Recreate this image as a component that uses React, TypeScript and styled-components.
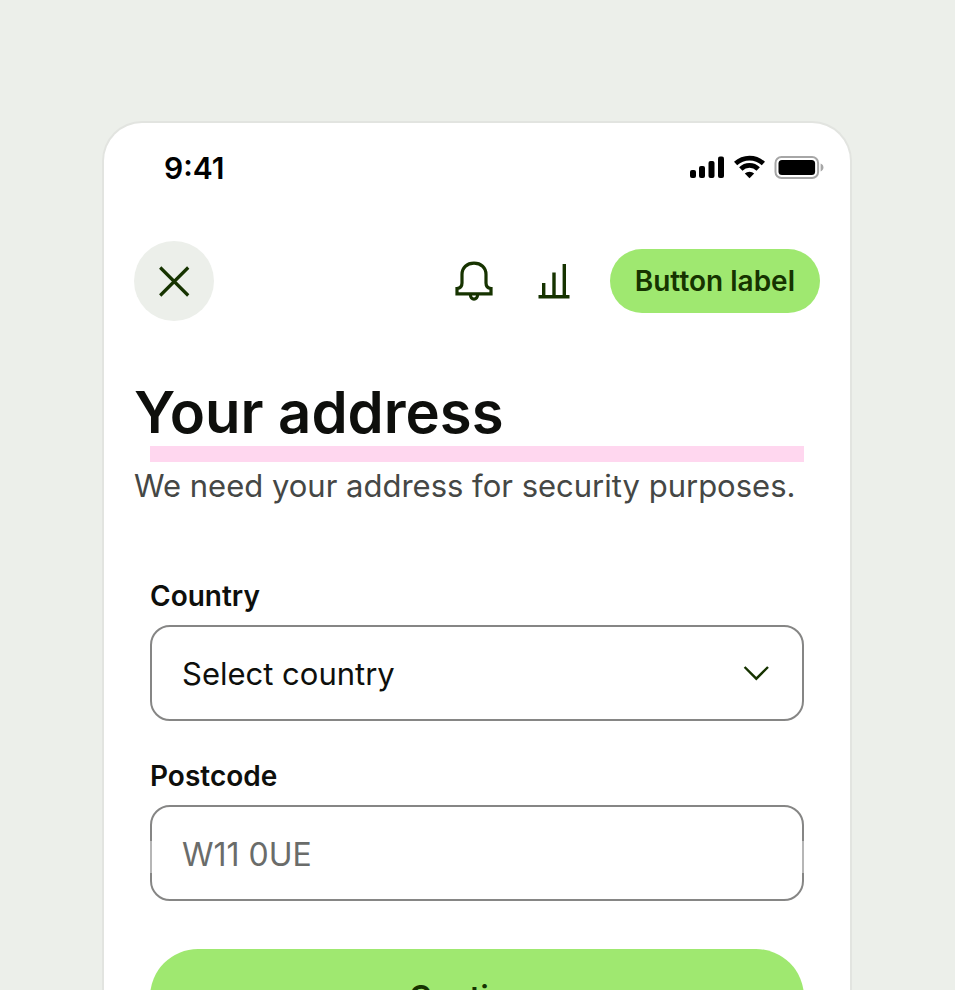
import React from "react";
import styled, { createGlobalStyle } from "styled-components";

const color = {
  canvas: "#ecefea",
  screen: "#ffffff",
  frame: "#e2e4e0",
  forest: "#163300",
  green: "#9fe870",
  ink: "#0e0f0c",
  body: "#454745",
  placeholder: "#6a6c6a",
  outline: "#868685",
  spacing: "#ffd7ef",
};

const GlobalStyle = createGlobalStyle`
  *, *::before, *::after { box-sizing: border-box; }
  body {
    margin: 0;
    background: ${color.canvas};
    font-family: Inter, "Liberation Sans", sans-serif;
  }
  button, input, select { font-family: inherit; }
`;

const Page = styled.div`
  height: 100vh;
  overflow: hidden;
  padding: 121px 103px 0 102px;
`;

const Screen = styled.main`
  padding-bottom: 64px;
  background: ${color.screen};
  border: 2px solid ${color.frame};
  border-bottom: 0;
  border-radius: 40px 40px 0 0;
`;

const StatusBar = styled.div`
  display: flex;
  align-items: center;
  justify-content: space-between;
  height: 88px;
  padding: 0 26px 0 60px;
`;

const Time = styled.time`
  padding-top: 2px;
  font-size: 30px;
  font-weight: 600;
  line-height: 40px;
  color: #000;
`;

const NavBar = styled.nav`
  display: flex;
  align-items: center;
  justify-content: space-between;
  margin-top: 30px;
  padding: 0 30px;
`;

const Actions = styled.div`
  display: flex;
  align-items: center;
  gap: 32px;
`;

const IconButton = styled.button<{ $filled?: boolean }>`
  display: flex;
  align-items: center;
  justify-content: center;
  width: ${(p) => (p.$filled ? 80 : 48)}px;
  height: ${(p) => (p.$filled ? 80 : 48)}px;
  padding: 0;
  border: 0;
  border-radius: 50%;
  background: ${(p) => (p.$filled ? color.canvas : "transparent")};
  color: ${color.forest};
`;

const PillButton = styled.button<{ $large?: boolean }>`
  height: ${(p) => (p.$large ? 96 : 64)}px;
  padding: 0 25px;
  border: 0;
  border-radius: 48px;
  background: ${color.green};
  color: ${color.forest};
  font-size: ${(p) => (p.$large ? 31 : 28)}px;
  font-weight: 600;
  line-height: 40px;
`;

const Header = styled.header`
  margin-top: 57px;
`;

const Title = styled.h1`
  margin: 0;
  padding: 0 30px;
  font-size: 58px;
  font-weight: 600;
  line-height: 68px;
  color: ${color.ink};
`;

const SpacingMarker = styled.div`
  height: 16px;
  margin: 0 46px;
  background: ${color.spacing};
`;

const Subtitle = styled.p`
  margin: 0;
  padding: 0 30px;
  font-size: 31px;
  line-height: 48px;
  white-space: nowrap;
  color: ${color.body};
`;

const Form = styled.form`
  display: flex;
  flex-direction: column;
  gap: 35px;
  margin-top: 66px;
  padding: 0 46px;
`;

const Field = styled.div`
  display: flex;
  flex-direction: column;
  gap: 9px;
`;

const Label = styled.label`
  font-size: 28px;
  font-weight: 600;
  line-height: 40px;
  color: ${color.ink};
`;

const Control = styled.div<{ $marked?: boolean }>`
  position: relative;
  display: grid;

  &::before,
  &::after {
    content: ${(p) => (p.$marked ? '""' : "none")};
    position: absolute;
    top: 36px;
    width: 2px;
    height: 32px;
    background: rgba(255, 255, 255, 0.4);
  }
  &::before { left: 0; }
  &::after { right: 0; }
`;

const Select = styled.select`
  appearance: none;
  width: 100%;
  height: 96px;
  padding: 0 80px 0 30px;
  border: 2px solid ${color.outline};
  border-radius: 20px;
  background: transparent;
  font-size: 31px;
  color: ${color.ink};
`;

const Input = styled.input`
  width: 100%;
  height: 96px;
  padding: 2px 30px 0;
  border: 2px solid ${color.outline};
  border-radius: 20px;
  background: transparent;
  font-size: 32px;
  color: ${color.ink};

  &::placeholder {
    color: ${color.placeholder};
    opacity: 1;
  }
`;

const Chevron = styled.svg`
  position: absolute;
  top: 32px;
  right: 32px;
  pointer-events: none;
`;

const Submit = styled(PillButton)`
  margin-top: 13px;
`;

function StatusIcons() {
  return (
    <svg width="136" height="26" viewBox="0 0 136 26" role="img" aria-label="Signal, Wi-Fi and battery">
      <rect x="2" y="16" width="6" height="8" rx="2" />
      <rect x="11" y="12" width="6" height="12" rx="2" />
      <rect x="20.5" y="7" width="6" height="17" rx="2" />
      <rect x="30" y="2.5" width="6" height="21.5" rx="2" />
      <g fill="none" stroke="#000" strokeWidth="4.7">
        <path d="M47.6 9.5 A20.5 20.5 0 0 1 75.4 9.5" />
        <path d="M52.8 15 A12.3 12.3 0 0 1 70.2 15" />
      </g>
      <path d="M61.5 24.2 L56.8 19.6 A6.8 6.8 0 0 1 66.2 19.6 Z" />
      <rect x="87.5" y="3" width="42.6" height="21" rx="6" fill="none" stroke="#a6a6a6" strokeWidth="2" />
      <rect x="90.5" y="6" width="36.6" height="15" rx="3.5" />
      <path d="M132.6 9.6 C136.4 11 136.4 16 132.6 17.4 Z" fill="#a6a6a6" />
    </svg>
  );
}

function CloseIcon() {
  return (
    <svg width="48" height="48" viewBox="0 0 48 48" fill="none" stroke="currentColor" strokeWidth="3.2" aria-hidden="true">
      <path d="M10.2 10.5 L38.2 38.5 M38.2 10.5 L10.2 38.5" />
    </svg>
  );
}

function BellIcon() {
  return (
    <svg width="48" height="48" viewBox="0 0 48 48" fill="none" stroke="currentColor" strokeWidth="3.2" aria-hidden="true">
      <path d="M7 36.9 V31.5 C10.2 31.2 12 29 12 26 V17.5 C12 10.5 17 6.2 24 6.2 C31 6.2 36 10.5 36 17.5 V26 C36 29 37.8 31.2 41 31.5 V36.9 Z" />
      <path d="M20.4 37.5 C20.4 43.6 27.6 43.6 27.6 37.5" />
    </svg>
  );
}

function ChartIcon() {
  return (
    <svg width="48" height="48" viewBox="0 0 48 48" fill="none" stroke="currentColor" strokeWidth="3.4" aria-hidden="true">
      <path d="M8.5 39.7 H39.5 M13.7 39 V26 M24 39 V15.5 M34.3 39 V7" />
    </svg>
  );
}

export default function App() {
  return (
    <>
      <GlobalStyle />
      <Page>
        <Screen>
          <StatusBar>
            <Time>9:41</Time>
            <StatusIcons />
          </StatusBar>
          <NavBar>
            <IconButton type="button" $filled aria-label="Close">
              <CloseIcon />
            </IconButton>
            <Actions>
              <IconButton type="button" aria-label="Notifications">
                <BellIcon />
              </IconButton>
              <IconButton type="button" aria-label="Insights">
                <ChartIcon />
              </IconButton>
              <PillButton type="button">Button label</PillButton>
            </Actions>
          </NavBar>
          <Header>
            <Title>Your address</Title>
            <SpacingMarker />
            <Subtitle>We need your address for security purposes.</Subtitle>
          </Header>
          <Form>
            <Field>
              <Label htmlFor="country">Country</Label>
              <Control>
                <Select id="country" defaultValue="">
                  <option value="">Select country</option>
                </Select>
                <Chevron width="32" height="32" viewBox="0 0 32 32" fill="none" stroke={color.forest} strokeWidth="2.4" aria-hidden="true">
                  <path d="M4.6 10 L16.3 21.7 L28 10" />
                </Chevron>
              </Control>
            </Field>
            <Field>
              <Label htmlFor="postcode">Postcode</Label>
              <Control $marked>
                <Input id="postcode" type="text" placeholder="W11 0UE" />
              </Control>
            </Field>
            <Submit type="submit" $large>Continue</Submit>
          </Form>
        </Screen>
      </Page>
    </>
  );
}
